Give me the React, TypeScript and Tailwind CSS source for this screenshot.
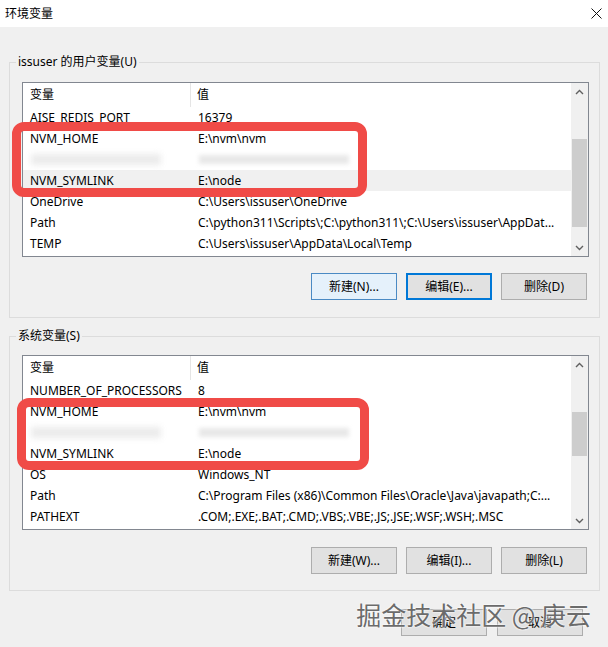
import React from "react";

type Row = { name: string; value: string; blur?: boolean; shade?: boolean };

const userRows: Row[] = [
  { name: "AISE_REDIS_PORT", value: "16379" },
  { name: "NVM_HOME", value: "E:\\nvm\\nvm" },
  { name: "", value: "", blur: true },
  { name: "NVM_SYMLINK", value: "E:\\node", shade: true },
  { name: "OneDrive", value: "C:\\Users\\issuser\\OneDrive" },
  { name: "Path", value: "C:\\python311\\Scripts\\;C:\\python311\\;C:\\Users\\issuser\\AppDat..." },
  { name: "TEMP", value: "C:\\Users\\issuser\\AppData\\Local\\Temp" },
];

const systemRows: Row[] = [
  { name: "NUMBER_OF_PROCESSORS", value: "8" },
  { name: "NVM_HOME", value: "E:\\nvm\\nvm" },
  { name: "", value: "", blur: true },
  { name: "NVM_SYMLINK", value: "E:\\node" },
  { name: "OS", value: "Windows_NT" },
  { name: "Path", value: "C:\\Program Files (x86)\\Common Files\\Oracle\\Java\\javapath;C:..." },
  { name: "PATHEXT", value: ".COM;.EXE;.BAT;.CMD;.VBS;.VBE;.JS;.JSE;.WSF;.WSH;.MSC" },
];

function Chevron({ up }: { up?: boolean }) {
  return (
    <svg width="9" height="6" viewBox="0 0 9 6" className="text-[#606060]">
      <path d={up ? "M1 5 L4.5 1.5 L8 5" : "M1 1 L4.5 4.5 L8 1"} fill="none" stroke="currentColor" strokeWidth="1.4" />
    </svg>
  );
}

function ListView({ rows, thumbTop, thumbHeight }: { rows: Row[]; thumbTop: number; thumbHeight: number }) {
  return (
    <div className="w-full h-[175px] border border-[#828790] bg-white flex">
      <div className="flex-1 overflow-hidden">
        <div className="h-[24px] flex items-center">
          <div className="w-[168px] h-full border-r border-[#e5e5e5] pl-[7px] flex items-center">变量</div>
          <div className="pl-[6px]">值</div>
        </div>
        {rows.map((r, i) => (
          <div key={i} className={`h-[21px] flex items-center whitespace-nowrap ${r.shade ? "bg-[#f0f0f0]" : ""}`}>
            {r.blur ? (
              <div className="flex items-center w-full">
                <div className="ml-[8px] w-[130px] h-[11px] bg-[#ebebeb] blur-[3px]" />
                <div className="ml-[38px] w-[150px] h-[9px] bg-[#e8e8e8] blur-[2px]" />
              </div>
            ) : (
              <>
                <div className="w-[168px] pl-[7px] shrink-0">{r.name}</div>
                <div className="pl-[7px]">{r.value}</div>
              </>
            )}
          </div>
        ))}
      </div>
      <div className="w-[17px] bg-[#f0f0f0] flex flex-col">
        <div className="h-[17px] flex items-center justify-center">
          <Chevron up />
        </div>
        <div className="flex-1 relative">
          <div className="absolute left-[1px] right-[1px] bg-[#cdcdcd]" style={{ top: thumbTop, height: thumbHeight }} />
        </div>
        <div className="h-[17px] flex items-center justify-center">
          <Chevron />
        </div>
      </div>
    </div>
  );
}

function Btn({ label, variant }: { label: string; variant?: "hover" | "focus" }) {
  const cls =
    variant === "hover"
      ? "border border-[#4a8ac4] bg-[#e5f1fb]"
      : variant === "focus"
      ? "border-2 border-[#0078d7] bg-[#e1e1e1]"
      : "border border-[#adadad] bg-[#e1e1e1]";
  return <div className={`w-[86px] h-[27px] flex items-center justify-center ${cls}`}>{label}</div>;
}

function Group({
  title,
  rows,
  thumbTop,
  thumbHeight,
  buttons,
  className,
  listGap,
}: {
  title: string;
  rows: Row[];
  thumbTop: number;
  thumbHeight: number;
  buttons: React.ReactNode;
  className: string;
  listGap: string;
}) {
  return (
    <fieldset className={`ml-[9px] mr-[8px] border border-[#dcdcdc] ${className}`}>
      <legend className="ml-[6px] px-[2px] leading-[16px]">{title}</legend>
      <div className="pl-[12px] pr-[10px]">
        <div className={listGap}>
          <ListView rows={rows} thumbTop={thumbTop} thumbHeight={thumbHeight} />
        </div>
        {buttons}
      </div>
    </fieldset>
  );
}

export default function App() {
  return (
    <div
      className="w-[608px] h-[647px] bg-[#f0f0f0] relative overflow-hidden text-[12px] text-black leading-[16px]"
      style={{ fontFamily: '"Noto Sans", "Noto Sans CJK SC", sans-serif' }}
    >
      {/* title bar */}
      <div className="h-[27px] bg-white flex items-center justify-between pl-[5px] pr-[6px]">
        <span>环境变量</span>
        <svg width="11" height="11" viewBox="0 0 11 11">
          <path d="M0.5 0.5 L10.5 10.5 M10.5 0.5 L0.5 10.5" stroke="#111" strokeWidth="1" />
        </svg>
      </div>

      <Group
        className="mt-[27px] pb-[17px]"
        listGap="mt-[12px]"
        title="issuser 的用户变量(U)"
        rows={userRows}
        thumbTop={39}
        thumbHeight={88}
        buttons={
          <div className="mt-[16px] flex justify-end gap-[9px] pr-[2px]">
            <Btn label="新建(N)..." variant="hover" />
            <Btn label="编辑(E)..." variant="focus" />
            <Btn label="删除(D)" />
          </div>
        }
      />

      <Group
        className="mt-[10px] pb-[16px]"
        listGap="mt-[11px]"
        title="系统变量(S)"
        rows={systemRows}
        thumbTop={39}
        thumbHeight={44}
        buttons={
          <div className="mt-[17px] flex justify-end gap-[9px] pr-[2px]">
            <Btn label="新建(W)..." />
            <Btn label="编辑(I)..." />
            <Btn label="删除(L)" />
          </div>
        }
      />

      <div className="mt-[18px] flex justify-end gap-[10px] pr-[25px]">
        <Btn label="确定" />
        <Btn label="取消" />
      </div>

      {/* red annotation boxes */}
      <div className="absolute left-[12px] top-[122px] w-[355px] h-[75px] border-[9px] border-[#f04b47] rounded-[12px]" />
      <div className="absolute left-[17px] top-[398px] w-[352px] h-[72px] border-[9px] border-[#f04b47] rounded-[12px]" />

      {/* watermark */}
      <div
        className="absolute right-[17px] top-[597px] text-[25px] leading-[34px] text-[#6b6b6b] [text-shadow:0_0_2px_#fff,0_0_2px_#fff]"
        style={{ fontFamily: '"Noto Sans CJK SC", sans-serif' }}
      >
        掘金技术社区 @ 庚云
      </div>
    </div>
  );
}
